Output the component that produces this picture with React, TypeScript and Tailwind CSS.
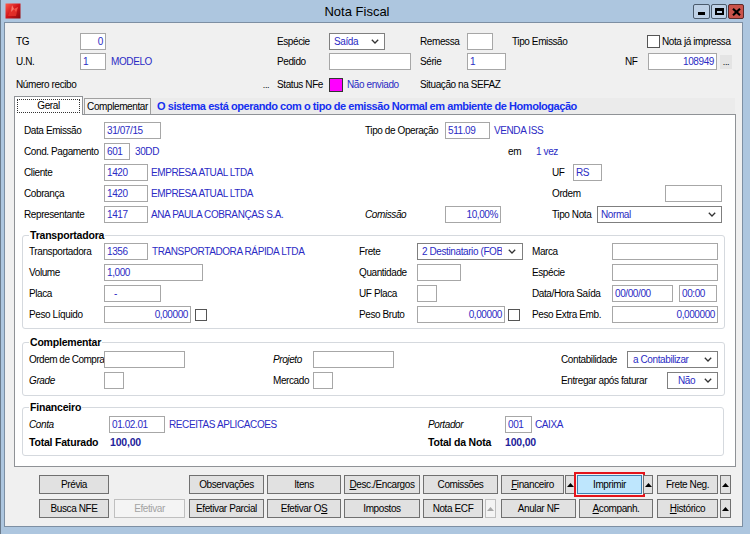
import React from 'react';

type P = { className?: string; children?: React.ReactNode };

function L({ className = '', children }: P) {
  return <span className={`shrink-0 whitespace-nowrap ${className}`}>{children}</span>;
}

function Blue({ className = '', children }: P) {
  return <span className={`shrink-0 whitespace-nowrap text-[#2b2bc4] ${className}`}>{children}</span>;
}

function Box({ className = '', children }: P) {
  return (
    <div
      className={`h-[17px] shrink-0 bg-white border border-[#a7a7a7] px-[2px] flex items-center text-[#2b2bc4] whitespace-nowrap overflow-hidden ${className}`}
    >
      {children}
    </div>
  );
}

function Chevron() {
  return (
    <svg width="8" height="5" viewBox="0 0 8 5" className="shrink-0">
      <path d="M0.8 0.8 L4 4 L7.2 0.8" stroke="#333" strokeWidth="1.3" fill="none" />
    </svg>
  );
}

function Select({ className = '', children }: P) {
  return (
    <div
      className={`h-[17px] shrink-0 bg-white border border-[#7f7f7f] pr-[5px] flex items-center gap-[3px] text-[#2b2bc4] ${className}`}
    >
      <span className="flex-1 overflow-hidden whitespace-nowrap">{children}</span>
      <Chevron />
    </div>
  );
}

function Check({ className = '' }: P) {
  return <div className={`w-[12px] h-[12px] shrink-0 bg-white border border-[#555] ${className}`} />;
}

function Btn({ className = '', children, disabled, hot }: P & { disabled?: boolean; hot?: boolean }) {
  const look = disabled
    ? 'border-[#bfbfbf] bg-[#f4f4f4] text-[#a3a3a3]'
    : hot
    ? 'border-[#3c7fb1] bg-[#bee6fd] outline-2 outline-solid outline-[#e3141b] outline-offset-[1px]'
    : 'border-[#707070] bg-[#e1e1e1]';
  return (
    <div className={`h-[19px] shrink-0 flex items-center justify-center border whitespace-nowrap ${look} ${className}`}>
      {children}
    </div>
  );
}

function Arrow({ className = '', disabled }: { className?: string; disabled?: boolean }) {
  return (
    <Btn className={className} disabled={disabled}>
      <svg width="7" height="4" viewBox="0 0 7 4">
        <path d="M0 4 L3.5 0 L7 4 Z" fill={disabled ? '#a8a8a8' : '#000'} />
      </svg>
    </Btn>
  );
}

function Dots({ className = '' }: P) {
  return (
    <span className={`shrink-0 h-[14px] px-[2px] bg-[#e4e4e4] flex items-end justify-center text-[9px] pb-[2px] ${className}`}>
      ...
    </span>
  );
}

function Gem() {
  return (
    <svg width="16" height="16" viewBox="0 0 16 16" className="shrink-0">
      <defs>
        <linearGradient id="g" x1="0" y1="0" x2="1" y2="1">
          <stop offset="0" stopColor="#ff5a4a" />
          <stop offset="0.5" stopColor="#d0141a" />
          <stop offset="1" stopColor="#8a0a0e" />
        </linearGradient>
      </defs>
      <rect x="0.5" y="0.5" width="15" height="15" fill="url(#g)" />
      <path d="M3 13 L7 2 L9 6 L13 4 L11 13 Z" fill="#e8342c" opacity="0.8" />
      <path d="M7 2 L9 6 L6 9 Z" fill="#ff9a8a" opacity="0.7" />
      <path d="M9 6 L13 4 L11 9 Z" fill="#ff7060" opacity="0.6" />
    </svg>
  );
}

export default function App() {
  return (
    <div className="w-[750px] h-[534px] flex flex-col bg-[#adc6df] border-l border-[#6b7b8c] overflow-hidden font-['Liberation_Sans',Arial,sans-serif] text-[10px] tracking-[-0.4px] text-black leading-none">
      {/* Title bar */}
      <div className="h-[22px] shrink-0 flex items-center">
        <div className="ml-[4px]">
          <Gem />
        </div>
        <div className="flex-1 text-center text-[13px] tracking-normal pt-[1px]">Nota Fiscal</div>
        <div className="flex items-center gap-[1px] mr-[6px] mt-[1px]">
          <div className="w-[17px] h-[15px] border border-[#4b5b6c] bg-[#bed1e6] rounded-[2px] flex items-end justify-center pb-[3px]">
            <div className="w-[7px] h-[3px] bg-black" />
          </div>
          <div className="w-[16px] h-[15px] border border-[#4b5b6c] bg-[#bed1e6] rounded-[2px] flex items-center justify-center">
            <div className="w-[9px] h-[7px] border-2 border-t-[3px] border-black" />
          </div>
          <div className="w-[16px] h-[15px] border border-[#5a2a2a] bg-[#c9524a] rounded-[2px] flex items-center justify-center">
            <svg width="9" height="8" viewBox="0 0 9 8">
              <path d="M1 0.8 L8 7.2 M8 0.8 L1 7.2" stroke="#000" strokeWidth="2.2" />
            </svg>
          </div>
        </div>
      </div>

      {/* Body */}
      <div className="flex-1 flex flex-col ml-[3px] mr-[7px] mb-[7px] bg-[#f0f0f0] border border-[#7d8fa3] pl-[9px] pt-[10px]">
        {/* Header rows */}
        <div className="flex items-center h-[17px] pl-[2px]">
          <L className="w-[64px]">TG</L>
          <Box className="w-[26px] justify-end">0</Box>
          <L className="ml-[171px] w-[52px]">Espécie</L>
          <Select className="w-[56px] pl-[4px]">Saída</Select>
          <L className="ml-[35px] w-[47px]">Remessa</L>
          <Box className="w-[26px]" />
          <L className="ml-[19px] w-[135px]">Tipo Emissão</L>
          <Check className="w-[13px] h-[13px] border-[#333]" />
          <L className="ml-[2px]">Nota já impressa</L>
        </div>
        <div className="flex items-center h-[17px] pl-[2px] mt-[3px]">
          <L className="w-[64px]">U.N.</L>
          <Box className="w-[26px]">1</Box>
          <Blue className="ml-[5px] w-[166px]">MODELO</Blue>
          <L className="w-[52px]">Pedido</L>
          <Box className="w-[82px]" />
          <L className="ml-[9px] w-[47px]">Série</L>
          <Box className="w-[39px]">1</Box>
          <L className="ml-[119px] w-[23px]">NF</L>
          <Box className="w-[69px] justify-end">108949</Box>
          <Dots className="ml-[3px] w-[12px]" />
        </div>
        <div className="flex items-center h-[17px] pl-[2px] mt-[6px]">
          <L className="w-[244px]">Número recibo</L>
          <Dots className="w-[12px] bg-transparent" />
          <L className="ml-[5px] w-[52px]">Status NFe</L>
          <div className="w-[14px] h-[14px] shrink-0 bg-[#ff00ff] border border-[#333]" />
          <Blue className="ml-[4px] w-[69px]">Não enviado</Blue>
          <L className="ml-[4px]">Situação na SEFAZ</L>
        </div>

        {/* Tabs */}
        <div className="flex items-end h-[18px] mt-[3px]">
          <div className="relative z-10 w-[69px] h-[19px] -mb-[1px] bg-white border border-b-0 border-[#8f9296] flex p-[2px]">
            <div className="flex-1 border border-dotted border-[#333] flex items-center justify-center">Geral</div>
          </div>
          <div className="w-[67px] h-[16px] bg-[#f4f4f4] border border-b-0 border-[#a0a0a0] flex items-center justify-center ml-[1px]">
            Complementar
          </div>
          <div className="w-[584px] h-[16px] bg-[#ebebeb] flex items-center pl-[6px] font-bold text-[11px] tracking-[-0.45px] text-[#1530f0]">
            O sistema está operando com o tipo de emissão Normal em ambiente de Homologação
          </div>
        </div>

        {/* Tab panel */}
        <div className="w-[722px] h-[353px] bg-white border border-[#8f9296] pl-[7px] pt-[7px]">
          <div className="flex flex-col gap-[4px] pl-[2px]">
            <div className="grid grid-cols-[341px_187px_1fr] h-[17px] items-center">
              <div className="flex items-center">
                <L className="w-[80px]">Data Emissão</L>
                <Box className="w-[57px]">31/07/15</Box>
              </div>
              <div className="flex items-center">
                <L className="w-[80px]">Tipo de Operação</L>
                <Box className="w-[45px]">511.09</Box>
                <Blue className="ml-[4px]">VENDA ISS</Blue>
              </div>
              <div />
            </div>
            <div className="grid grid-cols-[341px_187px_1fr] h-[17px] items-center">
              <div className="flex items-center">
                <L className="w-[80px]">Cond. Pagamento</L>
                <Box className="w-[26px]">601</Box>
                <Blue className="ml-[5px]">30DD</Blue>
              </div>
              <div className="col-span-2 flex items-center pl-[143px]">
                <L className="w-[28px]">em</L>
                <Blue>1 vez</Blue>
              </div>
            </div>
            <div className="grid grid-cols-[341px_187px_1fr] h-[17px] items-center">
              <div className="flex items-center">
                <L className="w-[80px]">Cliente</L>
                <Box className="w-[44px]">1420</Box>
                <Blue className="ml-[3px]">EMPRESA ATUAL LTDA</Blue>
              </div>
              <div />
              <div className="flex items-center">
                <L className="w-[21px]">UF</L>
                <Box className="w-[29px]">RS</Box>
              </div>
            </div>
            <div className="grid grid-cols-[341px_187px_1fr] h-[17px] items-center">
              <div className="flex items-center">
                <L className="w-[80px]">Cobrança</L>
                <Box className="w-[44px]">1420</Box>
                <Blue className="ml-[3px]">EMPRESA ATUAL LTDA</Blue>
              </div>
              <div />
              <div className="flex items-center">
                <L className="w-[113px]">Ordem</L>
                <Box className="w-[57px]" />
              </div>
            </div>
            <div className="grid grid-cols-[341px_187px_1fr] h-[17px] items-center">
              <div className="flex items-center">
                <L className="w-[80px]">Representante</L>
                <Box className="w-[44px]">1417</Box>
                <Blue className="ml-[3px]">ANA PAULA COBRANÇAS S.A.</Blue>
              </div>
              <div className="flex items-center">
                <L className="w-[80px] italic">Comissão</L>
                <Box className="w-[56px] justify-end">10,00%</Box>
              </div>
              <div className="flex items-center">
                <L className="w-[45px]">Tipo Nota</L>
                <Select className="w-[125px] pl-[3px]">Normal</Select>
              </div>
            </div>
          </div>

          {/* Transportadora */}
          <fieldset className="mt-[6px] w-[702px] border border-[#d5d9de] rounded-[3px] px-[6px] pb-[5px]">
            <legend className="px-[1px] font-bold text-[10.5px] tracking-[-0.2px] leading-[13px]">Transportadora</legend>
            <div className="flex flex-col gap-[4px] pt-[1px]">
              <div className="grid grid-cols-[330px_173px_1fr] h-[17px] items-center">
                <div className="flex items-center">
                  <L className="w-[75px]">Transportadora</L>
                  <Box className="w-[44px]">1356</Box>
                  <Blue className="ml-[4px]">TRANSPORTADORA RÁPIDA LTDA</Blue>
                </div>
                <div className="flex items-center">
                  <L className="w-[58px]">Frete</L>
                  <Select className="w-[106px] pl-[4px] pr-[6px] gap-[6px]">2 Destinatario (FOB)</Select>
                </div>
                <div className="flex items-center">
                  <L className="w-[80px]">Marca</L>
                  <Box className="w-[106px]" />
                </div>
              </div>
              <div className="grid grid-cols-[330px_173px_1fr] h-[17px] items-center">
                <div className="flex items-center">
                  <L className="w-[75px]">Volume</L>
                  <Box className="w-[99px]">1,000</Box>
                </div>
                <div className="flex items-center">
                  <L className="w-[58px]">Quantidade</L>
                  <Box className="w-[44px]" />
                </div>
                <div className="flex items-center">
                  <L className="w-[80px]">Espécie</L>
                  <Box className="w-[106px]" />
                </div>
              </div>
              <div className="grid grid-cols-[330px_173px_1fr] h-[17px] items-center">
                <div className="flex items-center">
                  <L className="w-[75px]">Placa</L>
                  <Box className="w-[57px] pl-[9px]">-</Box>
                </div>
                <div className="flex items-center">
                  <L className="w-[58px]">UF Placa</L>
                  <Box className="w-[20px]" />
                </div>
                <div className="flex items-center">
                  <L className="w-[80px]">Data/Hora Saída</L>
                  <Box className="w-[61px]">00/00/00</Box>
                  <Box className="ml-[6px] w-[38px]">00:00</Box>
                </div>
              </div>
              <div className="grid grid-cols-[330px_173px_1fr] h-[17px] items-center">
                <div className="flex items-center">
                  <L className="w-[75px]">Peso Líquido</L>
                  <Box className="w-[87px] justify-end">0,00000</Box>
                  <Check className="ml-[4px]" />
                </div>
                <div className="flex items-center">
                  <L className="w-[58px]">Peso Bruto</L>
                  <Box className="w-[88px] justify-end">0,00000</Box>
                  <Check className="ml-[3px]" />
                </div>
                <div className="flex items-center">
                  <L className="w-[80px]">Peso Extra Emb.</L>
                  <Box className="w-[106px] justify-end">0,000000</Box>
                </div>
              </div>
            </div>
          </fieldset>

          {/* Complementar */}
          <fieldset className="mt-[7px] w-[702px] border border-[#d5d9de] rounded-[3px] px-[6px] pb-[6px]">
            <legend className="px-[1px] font-bold text-[10.5px] tracking-[-0.2px] leading-[13px]">Complementar</legend>
            <div className="flex flex-col gap-[4px] pt-[2px]">
              <div className="grid grid-cols-[244px_288px_1fr] h-[17px] items-center">
                <div className="flex items-center">
                  <L className="w-[75px] tracking-[-0.5px]">Ordem de Compra</L>
                  <Box className="w-[81px]" />
                </div>
                <div className="flex items-center">
                  <L className="w-[40px] italic">Projeto</L>
                  <Box className="w-[81px]" />
                </div>
                <div className="flex items-center">
                  <L className="w-[66px]">Contabilidade</L>
                  <Select className="w-[91px] pl-[5px]">a Contabilizar</Select>
                </div>
              </div>
              <div className="grid grid-cols-[244px_288px_1fr] h-[17px] items-center">
                <div className="flex items-center">
                  <L className="w-[75px] italic">Grade</L>
                  <Box className="w-[20px]" />
                </div>
                <div className="flex items-center">
                  <L className="w-[40px]">Mercado</L>
                  <Box className="w-[20px]" />
                </div>
                <div className="flex items-center">
                  <L className="w-[106px]">Entregar após faturar</L>
                  <Select className="w-[51px] pl-[10px]">Não</Select>
                </div>
              </div>
            </div>
          </fieldset>

          {/* Financeiro */}
          <fieldset className="mt-[5px] w-[702px] border border-[#d5d9de] rounded-[3px] px-[6px] pb-[4px]">
            <legend className="px-[1px] font-bold text-[10.5px] tracking-[-0.2px] leading-[13px]">Financeiro</legend>
            <div className="flex flex-col gap-[1px] pt-[2px]">
              <div className="grid grid-cols-[399px_1fr] h-[17px] items-center">
                <div className="flex items-center">
                  <L className="w-[80px] italic">Conta</L>
                  <Box className="w-[56px]">01.02.01</Box>
                  <Blue className="ml-[4px]">RECEITAS APLICACOES</Blue>
                </div>
                <div className="flex items-center">
                  <L className="w-[77px] italic">Portador</L>
                  <Box className="w-[27px]">001</Box>
                  <Blue className="ml-[3px]">CAIXA</Blue>
                </div>
              </div>
              <div className="grid grid-cols-[399px_1fr] h-[17px] items-center font-bold text-[10.5px] tracking-[-0.2px]">
                <div className="flex items-center">
                  <L className="w-[81px]">Total Faturado</L>
                  <span className="text-[#23239b]">100,00</span>
                </div>
                <div className="flex items-center">
                  <L className="w-[77px]">Total da Nota</L>
                  <span className="text-[#23239b]">100,00</span>
                </div>
              </div>
            </div>
          </fieldset>
        </div>

        {/* Buttons */}
        <div className="flex items-center mt-[8px] ml-[25px]">
          <Btn className="w-[70px]">Prévia</Btn>
          <Btn className="ml-[80px] w-[75px]">Observações</Btn>
          <Btn className="ml-[3px] w-[74px]">Itens</Btn>
          <Btn className="ml-[3px] w-[76px]">
            <span className="underline">D</span>esc./Encargos
          </Btn>
          <Btn className="ml-[3px] w-[75px]">Comissões</Btn>
          <Btn className="ml-[3px] w-[63px]">
            <span className="underline">F</span>inanceiro
          </Btn>
          <Arrow className="ml-[1px] w-[11px]" />
          <Btn className="ml-[1px] w-[65px]" hot>
            Imprimir
          </Btn>
          <Arrow className="ml-[1px] w-[10px]" />
          <Btn className="ml-[4px] w-[61px]">Frete Neg.</Btn>
          <Arrow className="ml-[2px] w-[11px]" />
        </div>
        <div className="flex items-center mt-[5px] ml-[25px]">
          <Btn className="w-[70px]">Busca NFE</Btn>
          <Btn className="ml-[5px] w-[71px]" disabled>
            Efetivar
          </Btn>
          <Btn className="ml-[4px] w-[75px]">Efetivar Parcial</Btn>
          <Btn className="ml-[3px] w-[74px]">
            Efetivar O<span className="underline">S</span>
          </Btn>
          <Btn className="ml-[3px] w-[76px]">Impostos</Btn>
          <Btn className="ml-[3px] w-[60px]">Nota ECF</Btn>
          <Arrow className="ml-[2px] w-[11px]" disabled />
          <Btn className="ml-[5px] w-[75px]">Anular NF</Btn>
          <Btn className="ml-[3px] w-[74px]">
            <span className="underline">A</span>companh.
          </Btn>
          <Btn className="ml-[4px] w-[61px]">
            <span className="underline">H</span>istórico
          </Btn>
          <Arrow className="ml-[2px] w-[11px]" />
        </div>
      </div>
    </div>
  );
}
